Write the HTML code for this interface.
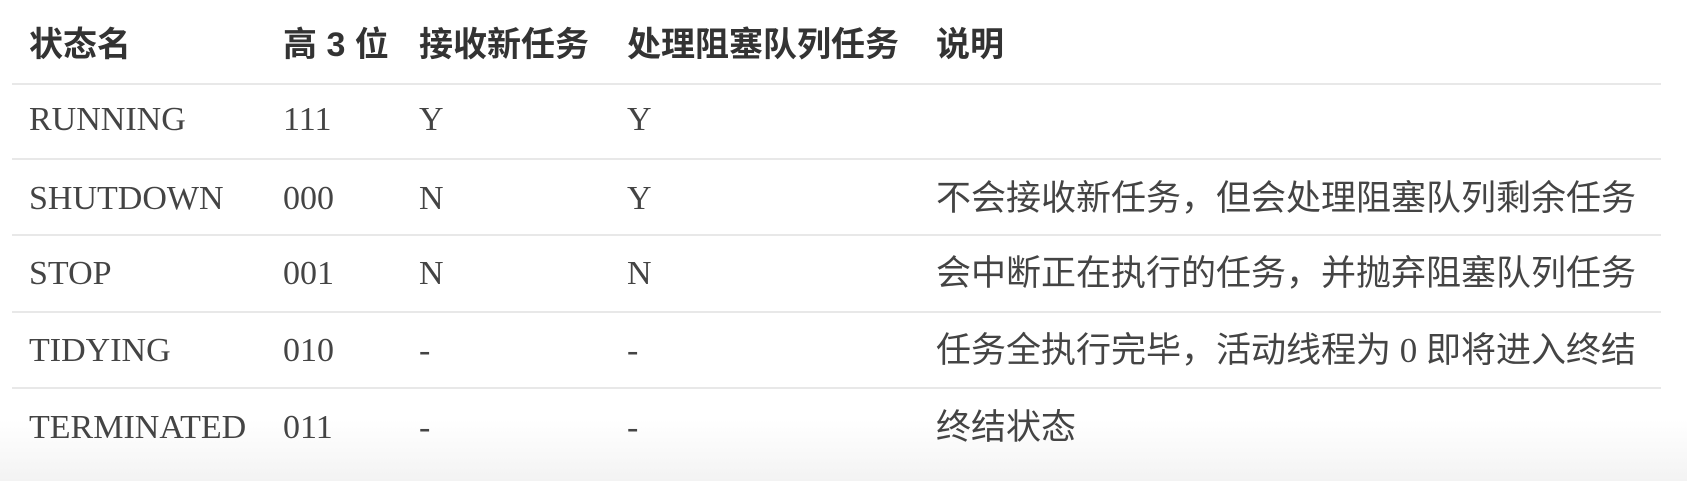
<!DOCTYPE html>
<html><head><meta charset="utf-8"><style>
html,body{margin:0;padding:0;width:1687px;height:481px;overflow:hidden;background:linear-gradient(#fff 0,#fff 420px,#f3f3f3 481px);}
.t{position:absolute;white-space:nowrap;color:#333;}
.h{font-family:"Liberation Sans","Noto Sans CJK SC",sans-serif;font-weight:bold;font-size:34px;color:#333;line-height:40px;}
.c{font-family:"Liberation Serif","Noto Sans CJK SC",serif;font-size:34px;color:#444;line-height:40px;}
.z{font-family:"Liberation Serif","Noto Sans CJK SC",sans-serif;font-size:35px;color:#444;line-height:40px;}
.l{position:absolute;left:12px;width:1649px;height:2px;background:#e8e8e8;}
</style></head><body>
<div class="t h" style="left:29px;top:25px">状态名</div>
<div class="t h" style="left:283px;top:25px">高 3 位</div>
<div class="t h" style="left:419px;top:25px">接收新任务</div>
<div class="t h" style="left:627px;top:25px">处理阻塞队列任务</div>
<div class="t h" style="left:936px;top:25px">说明</div>
<div class="l" style="top:83px"></div>
<div class="l" style="top:158px"></div>
<div class="l" style="top:234px"></div>
<div class="l" style="top:311px"></div>
<div class="l" style="top:387px"></div>

<div class="t c" style="left:29px;top:100px">RUNNING</div>
<div class="t c" style="left:283px;top:100px">111</div>
<div class="t c" style="left:419px;top:100px">Y</div>
<div class="t c" style="left:627px;top:100px">Y</div>

<div class="t c" style="left:29px;top:179px">SHUTDOWN</div>
<div class="t c" style="left:283px;top:179px">000</div>
<div class="t c" style="left:419px;top:179px">N</div>
<div class="t c" style="left:627px;top:179px">Y</div>
<div class="t z" style="left:936px;top:179px">不会接收新任务，但会处理阻塞队列剩余任务</div>

<div class="t c" style="left:29px;top:254px">STOP</div>
<div class="t c" style="left:283px;top:254px">001</div>
<div class="t c" style="left:419px;top:254px">N</div>
<div class="t c" style="left:627px;top:254px">N</div>
<div class="t z" style="left:936px;top:254px">会中断正在执行的任务，并抛弃阻塞队列任务</div>

<div class="t c" style="left:29px;top:331px">TIDYING</div>
<div class="t c" style="left:283px;top:331px">010</div>
<div class="t c" style="left:419px;top:331px">-</div>
<div class="t c" style="left:627px;top:331px">-</div>
<div class="t z" style="left:936px;top:331px">任务全执行完毕，活动线程为 0 即将进入终结</div>

<div class="t c" style="left:29px;top:408px">TERMINATED</div>
<div class="t c" style="left:283px;top:408px">011</div>
<div class="t c" style="left:419px;top:408px">-</div>
<div class="t c" style="left:627px;top:408px">-</div>
<div class="t z" style="left:936px;top:408px">终结状态</div>
</body></html>
